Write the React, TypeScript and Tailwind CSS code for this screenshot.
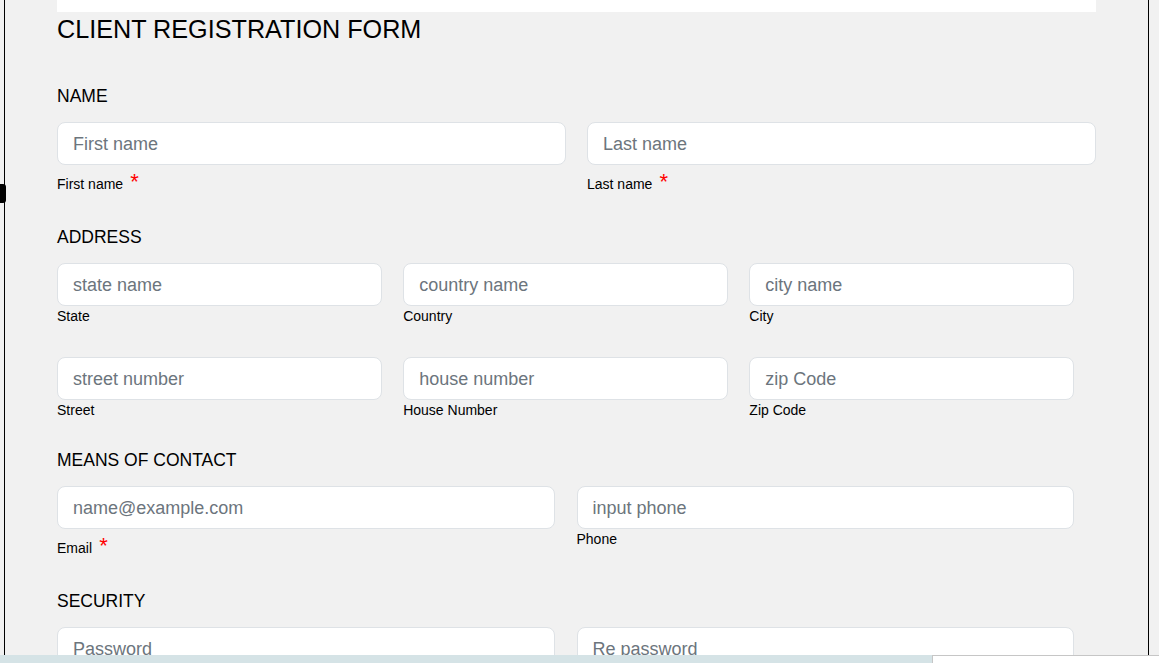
import React from 'react';

type Field = {
  placeholder: string;
  label: string;
  required?: boolean;
  type?: string;
};

function FormField({ placeholder, label, required, type }: Field) {
  return (
    <div className="flex flex-col">
      <input
        type={type || 'text'}
        placeholder={placeholder}
        className="h-[43px] w-full rounded-[8px] border border-[#dee2e6] bg-white px-[15px] pt-[1px] text-[18px] text-[#212529] outline-none placeholder:text-[#6c757d]"
      />
      <div className="mt-[2px] text-[14px] leading-[16px] text-black">
        {label}
        {required ? (
          <span className="ml-[1px] text-[22px] leading-[30px] text-[#ff0000]"> *</span>
        ) : (
          <></>
        )}
      </div>
    </div>
  );
}

function SectionTitle({ title, className }: { title: string; className: string }) {
  return (
    <div className={'mb-[15px] text-[17.5px] leading-[21px] text-black ' + className}>
      {title}
    </div>
  );
}

export default function App() {
  return (
    <div className="relative h-[663px] w-[1159px] overflow-hidden bg-[#f1f1f1] font-['Liberation_Sans',Arial,sans-serif]">
      <div className="ml-[4px] h-full w-[1145px] border-x border-black pl-[52px]">
        <div className="h-[12px] w-[1039px] bg-white"></div>
        <h1 className="mt-[3px] text-[25.2px] leading-[28px] text-black">
          CLIENT REGISTRATION FORM
        </h1>

        <SectionTitle title="NAME" className="mt-[43px]" />
        <div className="grid w-[1039px] grid-cols-2 gap-x-[21px]">
          <FormField placeholder="First name" label="First name" required />
          <FormField placeholder="Last name" label="Last name" required />
        </div>

        <SectionTitle title="ADDRESS" className="mt-[30px]" />
        <div className="grid w-[1017px] grid-cols-3 gap-x-[21.5px] gap-y-[33px]">
          <FormField placeholder="state name" label="State" />
          <FormField placeholder="country name" label="Country" />
          <FormField placeholder="city name" label="City" />
          <FormField placeholder="street number" label="Street" />
          <FormField placeholder="house number" label="House Number" />
          <FormField placeholder="zip Code" label="Zip Code" />
        </div>

        <SectionTitle title="MEANS OF CONTACT" className="mt-[32px]" />
        <div className="grid w-[1017px] grid-cols-2 items-start gap-x-[22px]">
          <FormField placeholder="name@example.com" label="Email" required type="email" />
          <FormField placeholder="input phone" label="Phone" />
        </div>

        <SectionTitle title="SECURITY" className="mt-[30px]" />
        <div className="grid w-[1017px] grid-cols-2 items-start gap-x-[22px]">
          <FormField placeholder="Password" label="Password" required type="password" />
          <FormField placeholder="Re password" label="Re password" required type="password" />
        </div>
      </div>

      <div className="absolute left-0 top-[184px] h-[19px] w-[6px] rounded-r-[3px] bg-black"></div>

      <div className="absolute bottom-0 left-0 flex h-[8px] w-full">
        <div className="h-full w-[932px] bg-[#d5e3e6]"></div>
        <div className="h-full flex-1 border-l border-t border-[#c6c6c6] bg-white"></div>
      </div>
    </div>
  );
}
